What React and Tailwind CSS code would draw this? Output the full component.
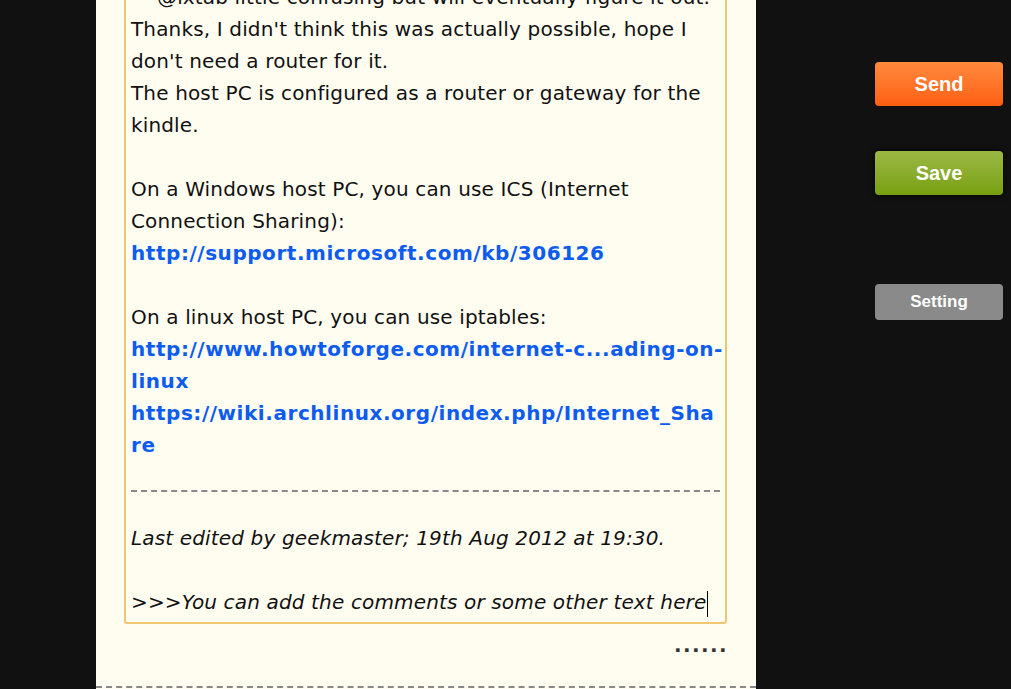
import React from "react";

function Blank() {
  return <div className="h-8" />;
}

function App() {
  return (
    <div className="flex h-[689px] w-[1011px] overflow-hidden bg-[#111111] font-['DejaVu_Sans',sans-serif]">
      <div className="w-24 shrink-0" />

      {/* post panel */}
      <div className="flex w-[660px] shrink-0 flex-col bg-[#fffdf0]">
        <div className="-mt-[21px] ml-7 mr-[29px] rounded-[3px] border-2 border-[#f0c674] pb-1 pl-[5px] pr-[2px] text-[20px] leading-8 tracking-[0.15px] text-[#111] break-words">
          <div className="pl-[26px]">
            @ixtab little confusing but will eventually figure it out.
          </div>
          <div>
            Thanks, I didn't think this was actually possible, hope I don't
            need a router for it.
          </div>
          <div>
            The host PC is configured as a router or gateway for the kindle.
          </div>
          <Blank />
          <div>
            On a Windows host PC, you can use ICS (Internet Connection
            Sharing):
          </div>
          <a
            href="#"
            className="block font-bold tracking-[0.55px] text-[#0d5cf0]"
          >
            http://support.microsoft.com/kb/306126
          </a>
          <Blank />
          <div>On a linux host PC, you can use iptables:</div>
          <a
            href="#"
            className="block font-bold tracking-[0.55px] text-[#0d5cf0]"
          >
            http://www.howtoforge.com/internet-c...ading-on-linux
          </a>
          <a
            href="#"
            className="block font-bold tracking-[0.55px] text-[#0d5cf0]"
          >
            https://wiki.archlinux.org/index.php/Internet_Share
          </a>
          <div className="mr-[3px] mt-[29px] border-t-2 border-dashed border-[#888]" />
          <div className="pt-[30px] italic">
            Last edited by geekmaster; 19th Aug 2012 at 19:30.
          </div>
          <Blank />
          <div className="italic">
            &gt;&gt;&gt;You can add the comments or some other text here
            <span className="ml-px inline-block h-[26px] w-px bg-black align-middle" />
          </div>
        </div>

        <div className="mr-[28px] mt-[5px] text-right text-[20px] font-bold leading-8 tracking-[1.4px] text-[#333]">
          ......
        </div>

        <div className="mt-[25px] border-t-2 border-dashed border-[#888]" />
      </div>

      {/* action buttons */}
      <div className="flex flex-1 flex-col items-end pr-2 pt-[62px] font-['Liberation_Sans',sans-serif]">
        <button className="h-11 w-32 rounded-[4px] bg-gradient-to-b from-[#ff8a3d] to-[#ff5e0e] text-[20px] font-bold text-white">
          Send
        </button>
        <button className="mt-[45px] h-11 w-32 rounded-[4px] bg-gradient-to-b from-[#9cb842] to-[#78a00c] text-[20px] font-bold text-white shadow-[0_0_6px_rgba(0,0,0,0.8)]">
          Save
        </button>
        <button className="mt-[89px] h-9 w-32 rounded-[4px] bg-[#8a8a8a] text-[17px] font-bold text-white">
          Setting
        </button>
      </div>
    </div>
  );
}

export default App;
